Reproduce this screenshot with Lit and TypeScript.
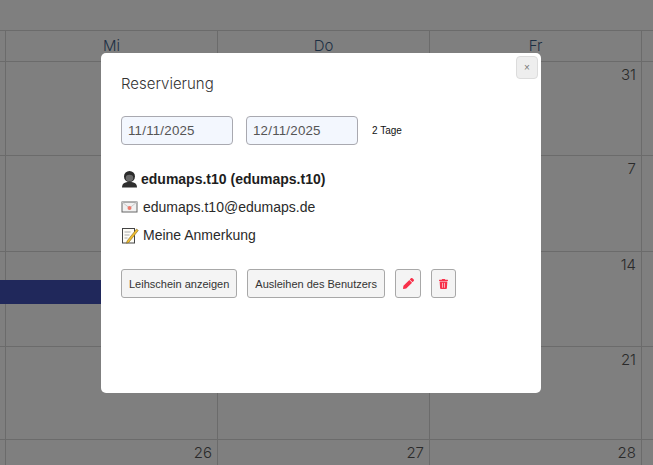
import { LitElement, css, html } from 'lit';
import { customElement } from 'lit/decorators.js';

const HEADERS = ['', 'Mi', 'Do', 'Fr', ''];
const ROWS: { height: number; days: string[] }[] = [
  { height: 94, days: ['', '', '', '31', ''] },
  { height: 96, days: ['', '', '', '7', ''] },
  { height: 95, days: ['', '', '', '14', ''] },
  { height: 93, days: ['', '', '', '21', ''] },
  { height: 30, days: ['', '26', '27', '28', ''] },
];

@customElement('app-root')
export class AppRoot extends LitElement {
  static styles = css`
    :host {
      display: block;
      position: relative;
      width: 653px;
      height: 465px;
      overflow: hidden;
      background: #7f7f7f;
      font-family: 'Liberation Sans', Arial, sans-serif;
    }

    .calendar {
      display: grid;
      grid-template-columns: 6px 212px 212px 212px 11px;
      padding-top: 30px;
      font-family: 'Inter', 'Liberation Sans', sans-serif;
      font-weight: 300;
    }

    .cell {
      box-sizing: border-box;
      border-top: 1px solid #6b6b6b;
      border-right: 1px solid #6b6b6b;
    }

    .cell:nth-child(5n) {
      border-right: none;
    }

    .head {
      height: 31px;
      text-align: center;
      font-size: 15px;
      line-height: 30px;
      color: #1d2f44;
    }

    .day {
      text-align: right;
      padding: 4px 5px 0 0;
      font-size: 15px;
      line-height: 18px;
      color: #2a2a2a;
    }

    .event {
      position: absolute;
      left: 0;
      top: 280px;
      width: 101px;
      height: 24px;
      background: #20285b;
    }

    .modal {
      position: absolute;
      left: 101px;
      top: 53px;
      width: 440px;
      height: 340px;
      box-sizing: border-box;
      padding: 20px;
      background: #fff;
      border-radius: 5px;
    }

    .close {
      position: absolute;
      top: 3px;
      right: 3px;
      width: 22px;
      height: 23px;
      padding: 0;
      box-sizing: border-box;
      border: 1px solid #dcdcdc;
      border-radius: 4px;
      background: #eeeeee;
      color: #777;
      font: 10px/20px 'Liberation Sans', sans-serif;
    }

    h2 {
      margin: 0;
      font-family: 'Inter', 'Liberation Sans', sans-serif;
      font-size: 15px;
      font-weight: 300;
      line-height: 22px;
      color: #333;
    }

    .dates {
      display: flex;
      align-items: center;
      margin-top: 21px;
    }

    .date {
      box-sizing: border-box;
      width: 112px;
      height: 29px;
      margin-right: 13px;
      padding-left: 6px;
      border: 1px solid #a9a9b0;
      border-radius: 4px;
      background: #f3f7fe;
      color: #555;
      font-size: 13.33px;
      line-height: 27px;
      letter-spacing: 0.2px;
    }

    .days {
      font-size: 10px;
      line-height: 12px;
      margin-left: 1px;
      color: #111;
    }

    .info {
      display: flex;
      flex-direction: column;
      margin-top: 20px;
      font-size: 14px;
      color: #2a2a2a;
    }

    .line {
      display: flex;
      align-items: center;
      height: 28px;
      gap: 4px;
    }

    .line svg {
      width: 18px;
      height: 18px;
      flex: none;
    }

    .name {
      gap: 2px;
      font-weight: 700;
      color: #1d1d1d;
    }

    .actions {
      display: flex;
      gap: 10px;
      margin-top: 20px;
    }

    button.action {
      box-sizing: border-box;
      height: 29px;
      padding: 0 7px;
      border: 1px solid #a8a8a8;
      border-radius: 3px;
      background: #f4f4f4;
      color: #333;
      font: 11px 'Liberation Sans', sans-serif;
    }

    button.icon {
      width: 26px;
      padding: 0;
      display: flex;
      align-items: center;
      justify-content: center;
    }

    button.trash {
      width: 25px;
    }

    button.icon svg {
      width: 11px;
      height: 11px;
      fill: #f8304a;
    }

    button.trash svg {
      width: 9px;
      height: 10px;
    }
  `;

  render() {
    return html`
      <div class="calendar">
        ${HEADERS.map((h) => html`<div class="cell head">${h}</div>`)}
        ${ROWS.map((row) =>
          row.days.map(
            (d) =>
              html`<div class="cell day" style="height:${row.height}px">${d}</div>`,
          ),
        )}
      </div>
      <div class="event"></div>

      <div class="modal">
        <button class="close">×</button>
        <h2>Reservierung</h2>
        <div class="dates">
          <div class="date">11/11/2025</div>
          <div class="date">12/11/2025</div>
          <span class="days">2 Tage</span>
        </div>
        <div class="info">
          <div class="line name">
            <svg viewBox="0 0 18 18">
              <path fill="#2f2f2f" d="M1 17.500c0-3.800 2.500-5.500 7.500-5.500s7.500 1.700 7.500 5.500z" />
              <circle cx="8.500" cy="6.500" r="5.500" fill="#2b2b2b" />
              <ellipse cx="8.500" cy="8" rx="3.800" ry="3.200" fill="#6a6a6a" />
            </svg>
            edumaps.t10 (edumaps.t10)
          </div>
          <div class="line">
            <svg viewBox="0 0 18 18">
              <rect x="1" y="4" width="15" height="10" fill="#f1f1f1" stroke="#666" />
              <path d="M1 4l7.500 6 7.500-6" fill="none" stroke="#c8c8c8" />
              <circle cx="8.500" cy="10" r="2" fill="#ec7a6c" />
            </svg>
            edumaps.t10@edumaps.de
          </div>
          <div class="line">
            <svg viewBox="0 0 18 18">
              <rect x="1.500" y="2.500" width="12" height="14.500" fill="#fdfcf6" stroke="#444" />
              <path d="M3.500 6h6M3.500 9h5M3.500 12h3" stroke="#aaa" />
              <path d="M6 15l9.500-12 1.800 1.400-9.500 12-2.300.8z" fill="#f2bd2f" stroke="#6b5a20" stroke-width=".5" />
            </svg>
            Meine Anmerkung
          </div>
        </div>
        <div class="actions">
          <button class="action">Leihschein anzeigen</button>
          <button class="action">Ausleihen des Benutzers</button>
          <button class="action icon">
            <svg viewBox="0 0 512 512">
              <path d="M497.900 142.100l-46.100 46.100c-4.700 4.700-12.300 4.700-17 0l-111-111c-4.700-4.700-4.700-12.300 0-17l46.100-46.100c18.700-18.700 49.100-18.700 67.900 0l60.100 60.100c18.800 18.700 18.800 49.100 0 67.900zM284.200 99.800L21.600 362.400.4 483.900c-2.900 16.400 11.400 30.600 27.800 27.800l121.500-21.300 262.600-262.600c4.700-4.700 4.700-12.300 0-17l-111-111c-4.800-4.700-12.400-4.700-17.100 0z" />
            </svg>
          </button>
          <button class="action icon trash">
            <svg viewBox="0 0 448 512" preserveAspectRatio="none">
              <path d="M432 32H312l-9.400-18.700A24 24 0 0 0 281.100 0H166.800a23.700 23.700 0 0 0-21.400 13.300L136 32H16A16 16 0 0 0 0 48v32a16 16 0 0 0 16 16h416a16 16 0 0 0 16-16V48a16 16 0 0 0-16-16zM53.200 467a48 48 0 0 0 47.900 45h245.800a48 48 0 0 0 47.900-45L416 128H32zM160 208a16 16 0 0 1 32 0v224a16 16 0 0 1-32 0zm96 0a16 16 0 0 1 32 0v224a16 16 0 0 1-32 0z" />
            </svg>
          </button>
        </div>
      </div>
    `;
  }
}
